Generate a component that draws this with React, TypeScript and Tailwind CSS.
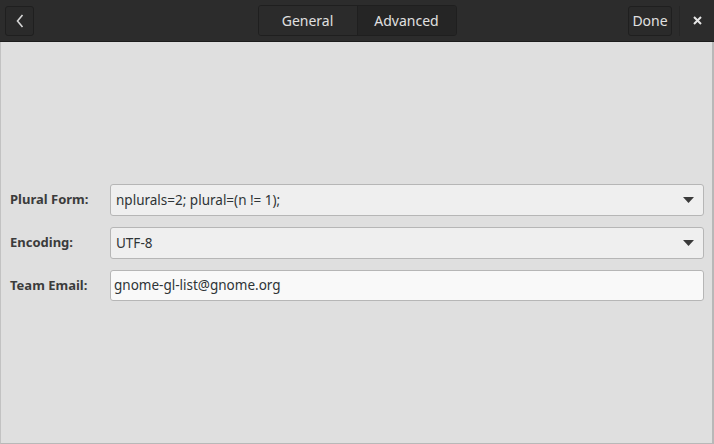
import React from 'react';

const font = { fontFamily: '"Noto Sans", "Open Sans", sans-serif' };

const Arrow: React.FC = () => (
  <svg width="11" height="6" viewBox="0 0 11 6" className="text-[#3a3a3a]">
    <path d="M0 0h11L5.5 6z" fill="currentColor" />
  </svg>
);

const App: React.FC = () => {
  return (
    <div className="w-[714px] h-[444px] flex flex-col bg-[#dfdfdf] text-[#2e3436] overflow-hidden" style={font}>
      {/* Header bar */}
      <header className="h-[42px] shrink-0 bg-[#2c2c2c] border-b border-[#1c1c1c] grid grid-cols-[1fr_auto_1fr] items-center text-[14px] text-[#eeeeec]">
        <div className="flex pl-[5px]">
          <button className="w-[29px] h-[30px] rounded-[3px] border border-[#1f1f1f] bg-[#2a2a2a] flex items-center justify-center">
            <svg width="8" height="14" viewBox="0 0 8 14" fill="none" stroke="#d6d6d6" strokeWidth="1.6">
              <path d="M6.5 1L1.5 7l5 6" />
            </svg>
          </button>
        </div>
        <div className="flex h-[31px] rounded-[3px] border border-[#1f1f1f] overflow-hidden">
          <button className="w-[99px] bg-[#2b2b2b] border-r border-[#1f1f1f] text-[#e0e0e0]">General</button>
          <button className="w-[98px] bg-[#252525] text-[#e0e0e0]">Advanced</button>
        </div>
        <div className="flex items-center justify-end">
          <button className="h-[30px] w-[44px] rounded-[3px] border border-[#1f1f1f] bg-[#2a2a2a] text-[#e0e0e0]">Done</button>
          <div className="w-px h-[30px] bg-[#262626] ml-[7px]" />
          <div className="w-[34px] flex items-center justify-center text-[#e6e6e6]">
            <svg width="9" height="9" viewBox="0 0 9 9" stroke="currentColor" strokeWidth="2">
              <path d="M1 1l7 7M8 1l-7 7" />
            </svg>
          </div>
        </div>
      </header>

      {/* Content */}
      <main className="flex-1 border-l border-r-[2px] border-b border-l-[#c2c2c2] border-r-[#b8b8b8] border-b-[#b8b8b8] pt-[142px] pl-[9px] pr-[8px] text-[13.5px]">
        <div className="flex flex-col gap-[11px]">
          <div className="flex items-center">
            <div className="w-[100px] font-bold text-[13px] text-[#3b3b3b]">Plural Form:</div>
            <div className="flex-1 h-[32px] rounded-[3px] border border-[#b6b6b6] bg-[#efefef] flex items-center justify-between pl-[5px] pr-[9px]">
              <span>nplurals=2; plural=(n != 1);</span>
              <Arrow />
            </div>
          </div>
          <div className="flex items-center">
            <div className="w-[100px] font-bold text-[13px] text-[#3b3b3b]">Encoding:</div>
            <div className="flex-1 h-[32px] rounded-[3px] border border-[#b6b6b6] bg-[#efefef] flex items-center justify-between pl-[5px] pr-[9px]">
              <span>UTF-8</span>
              <Arrow />
            </div>
          </div>
          <div className="flex items-center">
            <div className="w-[100px] font-bold text-[13px] text-[#3b3b3b]">Team Email:</div>
            <div className="flex-1 h-[31px] rounded-[3px] border border-[#b6b6b6] bg-[#f9f9f9] flex items-center pl-[3px]">
              <span>gnome-gl-list@gnome.org</span>
            </div>
          </div>
        </div>
      </main>
    </div>
  );
};

export default App;
